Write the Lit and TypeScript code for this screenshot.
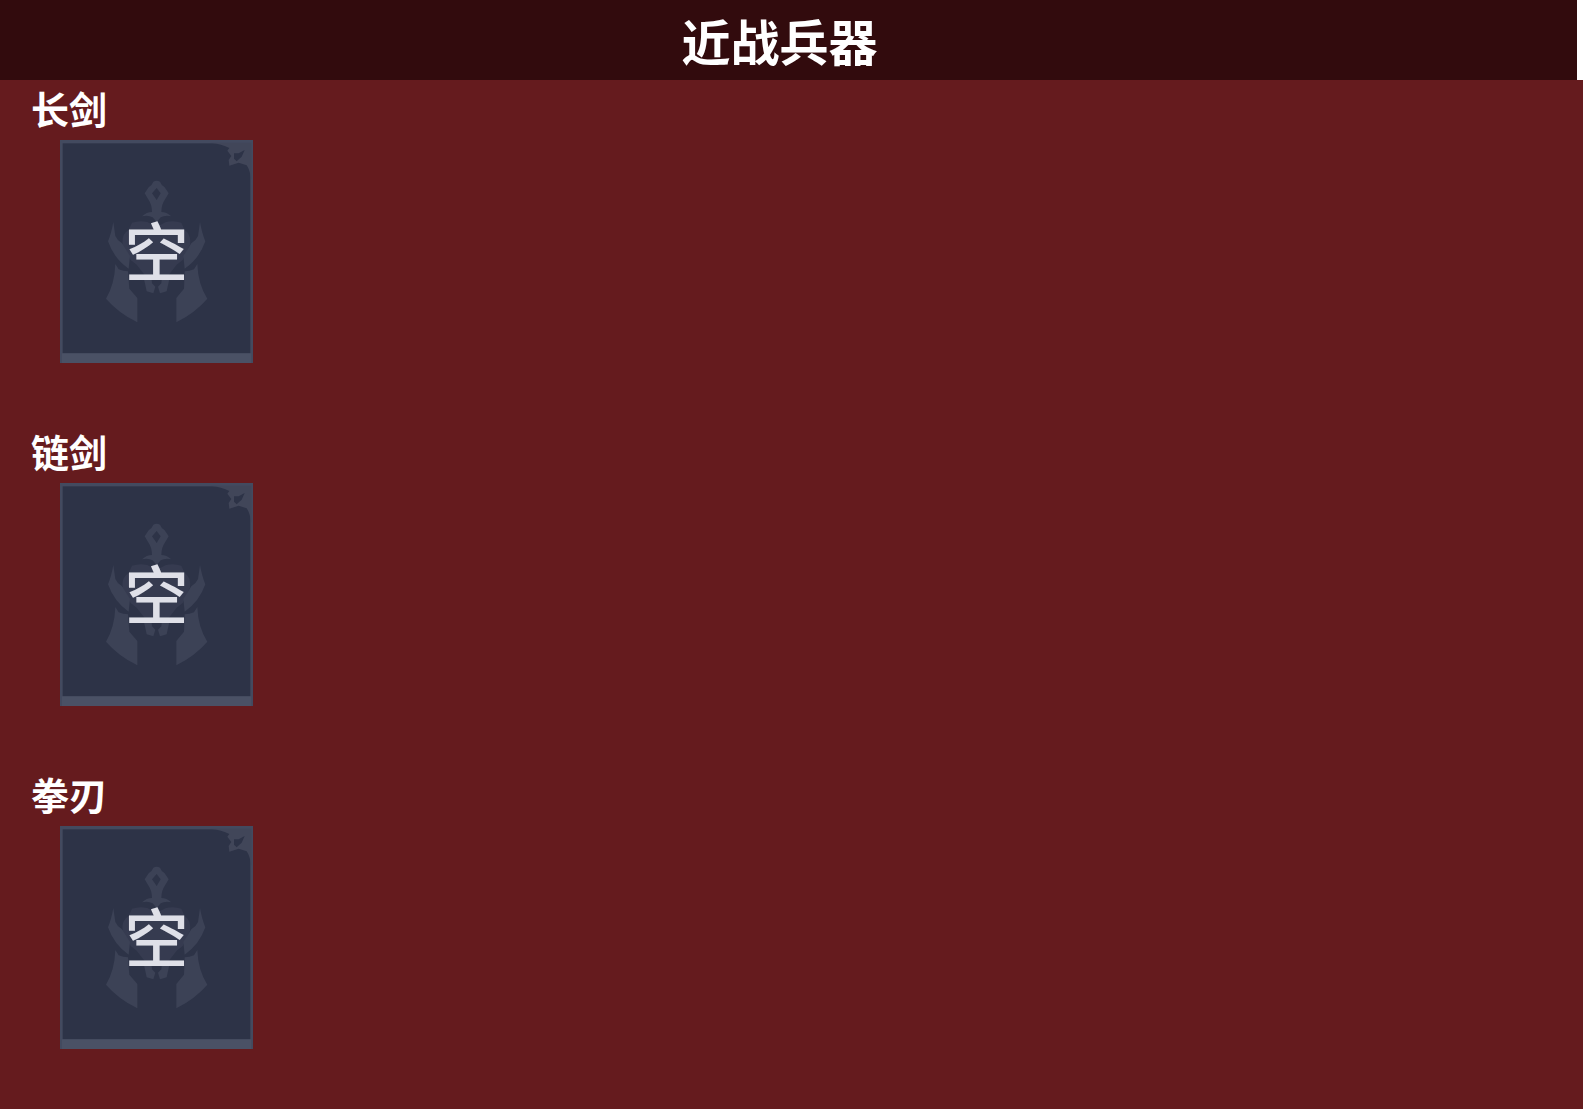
import { LitElement, html, css } from 'lit';
import { customElement, property } from 'lit/decorators.js';

/**
 * Empty weapon slot: framed card with the faint helmet-and-sword emblem
 * behind the slot text.
 */
@customElement('weapon-slot')
export class WeaponSlot extends LitElement {
  static styles = css`
    :host {
      display: grid;
      width: 193px;
      height: 223px;
    }

    svg,
    .text {
      grid-area: 1 / 1;
    }

    svg {
      width: 100%;
      height: 100%;
    }

    .frame {
      fill: #434a5f;
    }

    .panel {
      fill: #2d3347;
    }

    .base {
      fill: #4a5165;
    }

    .corner {
      fill: #414659;
    }

    .emblem {
      fill: #3c4256;
    }

    .emblem-dim {
      fill: #363b50;
    }

    .text {
      justify-self: center;
      padding-top: 76px;
      color: #dfe0e8;
      font-size: 64px;
      font-weight: 500;
      line-height: 64px;
    }
  `;

  @property() text = '空';

  render() {
    return html`
      <svg viewBox="30 30 579 669" aria-hidden="true">
        <rect class="frame" x="30" y="30" width="579" height="669" />
        <rect class="panel" x="38" y="40" width="563" height="630" />
        <rect class="base" x="36" y="670" width="568" height="29" />
        <!-- Corner ornament -->
        <path class="corner"
          d="M480 38 H604 V150 Q600 120 590 106 L566 98 L538 107 L536 90 L544 78 L532 62 L538 54 Q516 42 480 38 Z" />
        <path class="panel" d="M552 70 L566 70 L584 60 L575 80 L560 94 L552 86 Z" />
        <!-- Hilt -->
        <path class="emblem" fill-rule="evenodd"
          d="M310 155 Q320 149 330 155 Q334 166 344 172 L356 190 L344 210 Q334 224 334 246 Q350 246 364 259 Q346 254 332 262 L320 276 L308 262 Q294 254 276 259 Q290 246 306 246 Q306 224 296 210 L284 190 L296 172 Q306 166 310 155 Z
             M320 174 L306 190 L320 210 L332 190 Z" />
        <!-- Skull -->
        <path class="emblem-dim"
          d="M246 278 Q268 270 292 276 L320 290 L348 276 Q372 270 394 278 L404 300 Q424 312 420 344 L398 390 L380 404 L352 440 H288 L260 404 L242 390 L218 344 Q214 312 236 300 Z" />
        <!-- Jaw -->
        <path class="emblem"
          d="M280 438 H304 L306 460 L316 470 L310 490 L290 484 Z" />
        <path class="emblem"
          d="M360 438 H336 L334 460 L324 470 L330 490 L350 484 Z" />
        <!-- Horns -->
        <path class="emblem"
          d="M190 276 L196 318 Q202 332 216 340 L240 378 L236 416 Q192 386 174 334 Q184 310 190 276 Z" />
        <path class="emblem"
          d="M450 276 L444 318 Q438 332 424 340 L400 378 L404 416 Q448 386 466 334 Q456 310 450 276 Z" />
        <!-- Cheek guards -->
        <path class="emblem"
          d="M196 402 L206 418 Q220 424 234 424 L238 476 L262 504 V577 Q204 548 168 506 Q194 462 196 402 Z" />
        <path class="emblem"
          d="M442 402 L432 418 Q418 424 404 424 L402 476 L379 504 V577 Q436 548 472 506 Q444 462 442 402 Z" />
      </svg>
      <span class="text">${this.text}</span>
    `;
  }
}

@customElement('app-root')
export class AppRoot extends LitElement {
  static styles = css`
    :host {
      display: block;
      min-height: 100vh;
      background: #651b1e;
      color: #fff;
      font-family: 'Noto Sans CJK SC', sans-serif;
    }

    .header {
      box-sizing: border-box;
      height: 80px;
      padding: 4px 18px 0 0;
      border-right: 6px solid #fff;
      background: #320b0d;
    }

    .title {
      margin: 0;
      font-size: 49px;
      font-weight: 700;
      line-height: 72px;
      text-align: center;
    }

    .group {
      height: 343px;
    }

    .name {
      margin: 0;
      padding: 0 31px 4px;
      font-size: 38px;
      font-weight: 700;
      line-height: 56px;
    }

    weapon-slot {
      margin-left: 60px;
    }
  `;

  private groups = ['长剑', '链剑', '拳刃'];

  render() {
    return html`
      <header class="header">
        <h1 class="title">近战兵器</h1>
      </header>
      <main>
        ${this.groups.map(
          (name) => html`
            <section class="group">
              <h2 class="name">${name}</h2>
              <weapon-slot></weapon-slot>
            </section>
          `
        )}
      </main>
    `;
  }
}

declare global {
  interface HTMLElementTagNameMap {
    'weapon-slot': WeaponSlot;
    'app-root': AppRoot;
  }
}
